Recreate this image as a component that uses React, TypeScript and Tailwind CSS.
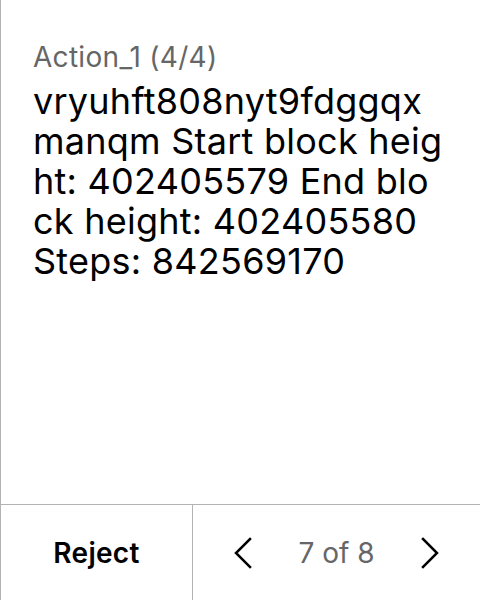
const Chevron = ({ dir }: { dir: 'left' | 'right' }) => (
    <svg width="20" height="32" viewBox="0 0 20 32" fill="none" stroke="black" strokeWidth="2.5" strokeLinecap="square">
        {dir === 'left' ? <polyline points="17,2 3,16 17,30" /> : <polyline points="3,2 17,16 3,30" />}
    </svg>
);

const App = () => {
    return (
        <div className="flex h-[600px] w-[480px] flex-col border-l border-[#b3b3b3] bg-white font-['Inter',sans-serif]">
            <div className="flex-1 pl-[32px] pr-[32px] pt-[41px]">
                <div className="text-[28px] leading-[32px] tracking-[0.3px] text-[#666666]">Action_1 (4/4)</div>
                <div className="mt-[8px] break-all text-[36px] leading-[40px] tracking-[0.25px] text-black">
                    vryuhft808nyt9fdggqxmanqm Start block height: 402405579 End block height: 402405580 Steps: 842569170
                </div>
            </div>
            <div className="flex h-[96px] border-t border-[#b3b3b3]">
                <button className="flex w-[192px] items-center justify-center border-r border-[#b3b3b3] text-[28px] font-semibold tracking-[0.3px] text-black">
                    Reject
                </button>
                <div className="flex flex-1 items-center justify-between px-[40px]">
                    <Chevron dir="left" />
                    <span className="text-[28px] text-[#666666]">7 of 8</span>
                    <Chevron dir="right" />
                </div>
            </div>
        </div>
    );
};

export default App;
